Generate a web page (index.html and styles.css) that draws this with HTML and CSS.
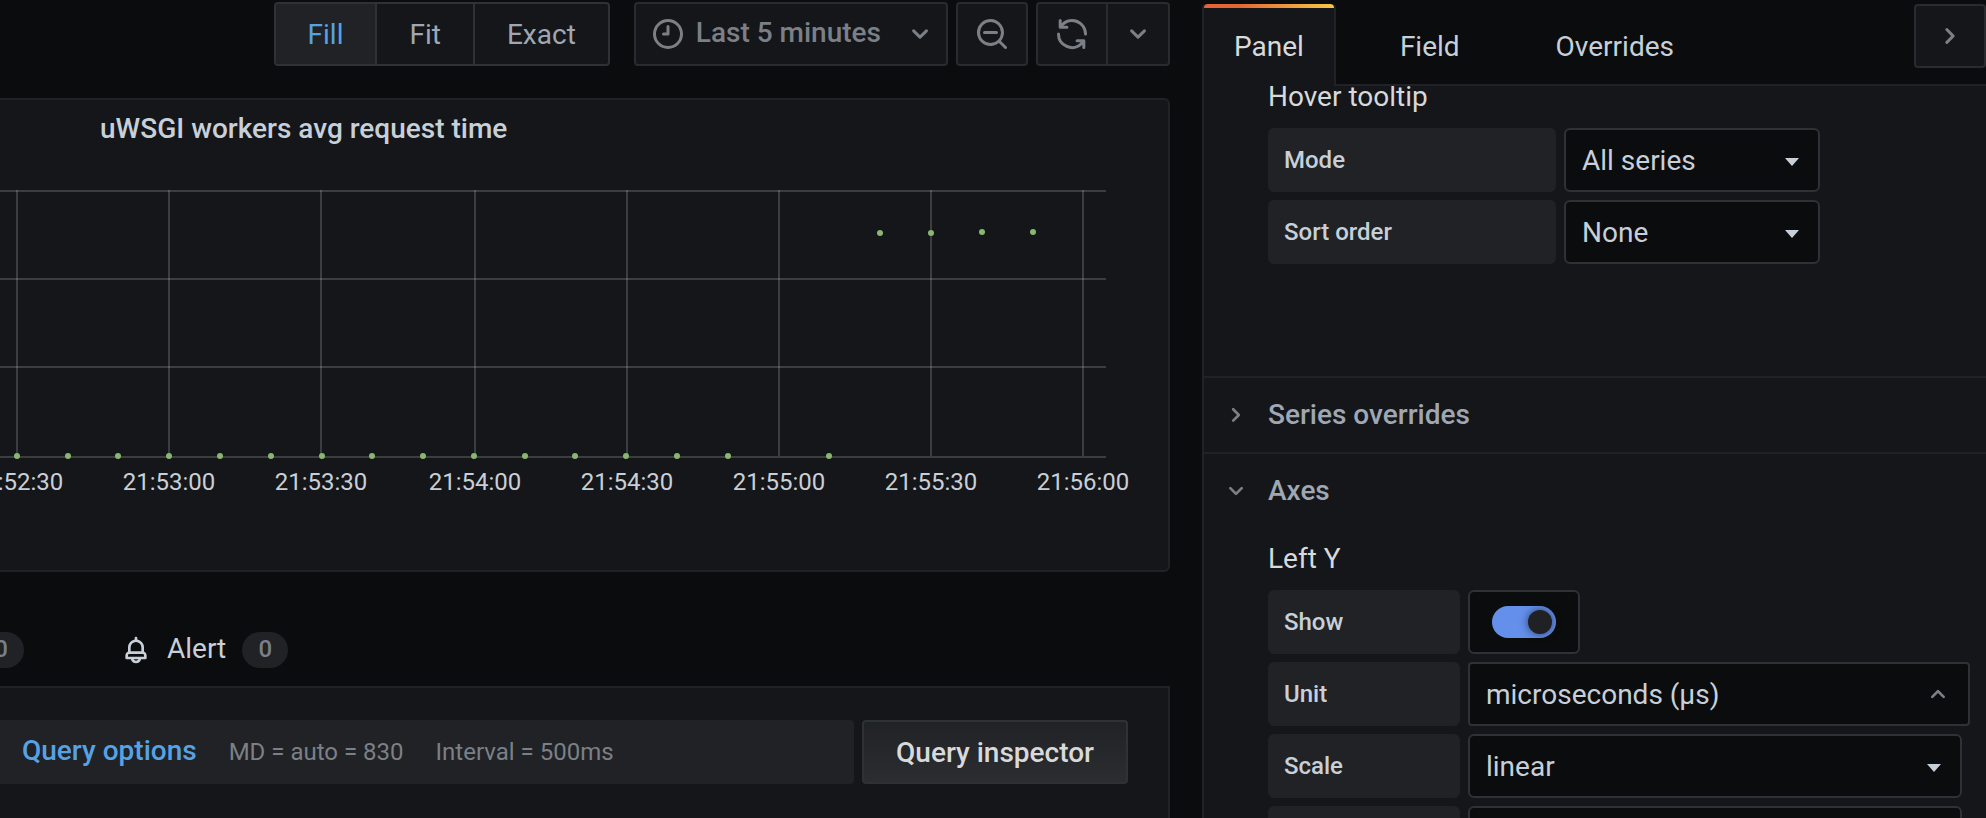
FILE: index.html
```html
<!DOCTYPE html>
<html lang="en">
<head>
<meta charset="utf-8">
<title>Edit panel</title>
<link rel="stylesheet" href="styles.css">
</head>
<body>
<svg class="sprite" aria-hidden="true">
  <symbol id="clock" viewBox="0 0 24 24"><path d="M12,2A10,10,0,1,0,22,12,10,10,0,0,0,12,2Zm0,18a8,8,0,1,1,8-8A8,8,0,0,1,12,20ZM12,6a1,1,0,0,0-1,1v4H9a1,1,0,0,0,0,2h3a1,1,0,0,0,1-1V7A1,1,0,0,0,12,6Z"/></symbol>
  <symbol id="angle" viewBox="0 0 24 24"><path d="M17,9.17a1,1,0,0,0-1.41,0L12,12.71,8.46,9.17a1,1,0,0,0-1.41,0,1,1,0,0,0,0,1.42l4.24,4.24a1,1,0,0,0,1.42,0L17,10.59A1,1,0,0,0,17,9.17Z"/></symbol>
  <symbol id="zoom-out" viewBox="0 0 24 24"><path d="M21.71,20.29,18,16.61A9,9,0,1,0,16.61,18l3.68,3.68a1,1,0,0,0,1.42,0A1,1,0,0,0,21.71,20.29ZM11,18a7,7,0,1,1,7-7A7,7,0,0,1,11,18Zm4-8H7a1,1,0,0,0,0,2h8a1,1,0,0,0,0-2Z"/></symbol>
  <symbol id="sync" viewBox="0 0 24 24"><path d="M19.91,15.51H15.38a1,1,0,0,0,0,2h2.4A8,8,0,0,1,4,12a1,1,0,0,0-2,0,10,10,0,0,0,16.88,7.23V21a1,1,0,0,0,2,0V16.5A1,1,0,0,0,19.91,15.51ZM12,2A10,10,0,0,0,5.12,4.77V3a1,1,0,0,0-2,0V7.5a1,1,0,0,0,1,1h4.5a1,1,0,0,0,0-2H6.22A8,8,0,0,1,20,12a1,1,0,0,0,2,0A10,10,0,0,0,12,2Z"/></symbol>
  <symbol id="bell" viewBox="0 0 24 24"><path d="M18,13.18V10a6,6,0,0,0-5-5.91V3a1,1,0,0,0-2,0V4.09A6,6,0,0,0,6,10v3.18A3,3,0,0,0,4,16v2a1,1,0,0,0,1,1H8.14a4,4,0,0,0,7.72,0H19a1,1,0,0,0,1-1V16A3,3,0,0,0,18,13.18ZM8,10a4,4,0,0,1,8,0v3H8Zm4,10a2,2,0,0,1-1.72-1h3.44A2,2,0,0,1,12,20Zm6-3H6V16a1,1,0,0,1,1-1H17a1,1,0,0,1,1,1Z"/></symbol>
</svg>
<div class="editor">
  <main class="main">
    <div class="toolbar">
      <div class="segmented">
        <button class="segment segment-active" type="button">Fill</button>
        <button class="segment" type="button">Fit</button>
        <button class="segment" type="button">Exact</button>
      </div>
      <button class="tool time-picker" type="button">
        <svg class="icon"><use href="#clock"/></svg>
        <span class="time-label">Last 5 minutes</span>
        <svg class="icon"><use href="#angle"/></svg>
      </button>
      <button class="tool tool-icon" type="button" aria-label="Zoom out"><svg class="icon"><use href="#zoom-out"/></svg></button>
      <div class="refresh">
        <button class="tool tool-icon refresh-run" type="button" aria-label="Refresh"><svg class="icon"><use href="#sync"/></svg></button>
        <button class="tool refresh-menu" type="button" aria-label="Refresh interval"><svg class="icon"><use href="#angle"/></svg></button>
      </div>
    </div>

    <section class="panel">
      <h2 class="panel-title">uWSGI workers avg request time</h2>
      <svg class="chart" viewBox="0 0 1168 380" preserveAspectRatio="xMaxYMin slice">
        <path class="grid" d="M0 31H1106M0 119H1106M0 207H1106M0 297H1106"/>
        <path class="grid" d="M17 30V296M169 30V296M321 30V296M475 30V296M627 30V296M779 30V296M931 30V296M1083 30V296"/>
        <g class="points">
          <circle cx="17" cy="296" r="3"/><circle cx="68" cy="296" r="3"/><circle cx="118" cy="296" r="3"/><circle cx="169" cy="296" r="3"/>
          <circle cx="220" cy="296" r="3"/><circle cx="271" cy="296" r="3"/><circle cx="322" cy="296" r="3"/><circle cx="372" cy="296" r="3"/>
          <circle cx="423" cy="296" r="3"/><circle cx="474" cy="296" r="3"/><circle cx="525" cy="296" r="3"/><circle cx="575" cy="296" r="3"/>
          <circle cx="626" cy="296" r="3"/><circle cx="677" cy="296" r="3"/><circle cx="728" cy="296" r="3"/><circle cx="829" cy="296" r="3"/>
          <circle cx="880" cy="73" r="3"/><circle cx="931" cy="73" r="3"/><circle cx="982" cy="72" r="3"/><circle cx="1033" cy="72" r="3"/>
        </g>
        <g class="ticks">
          <text x="17" y="330">21:52:30</text><text x="169" y="330">21:53:00</text><text x="321" y="330">21:53:30</text><text x="475" y="330">21:54:00</text>
          <text x="627" y="330">21:54:30</text><text x="779" y="330">21:55:00</text><text x="931" y="330">21:55:30</text><text x="1083" y="330">21:56:00</text>
        </g>
      </svg>
    </section>

    <nav class="query-tabs">
      <span class="badge badge-cut">0</span>
      <a class="query-tab" href="#alert">
        <svg class="icon icon-small"><use href="#bell"/></svg>
        <span class="query-tab-name">Alert</span>
        <span class="badge">0</span>
      </a>
    </nav>

    <section class="query">
      <div class="query-options">
        <a class="query-link" href="#options">Query options</a>
        <span>MD = auto = 830</span>
        <span>Interval = 500ms</span>
      </div>
      <button class="inspector" type="button">Query inspector</button>
    </section>
  </main>

  <aside class="side">
    <div class="side-tabs">
      <a class="side-tab side-tab-active" href="#panel">Panel</a>
      <a class="side-tab" href="#field">Field</a>
      <a class="side-tab" href="#overrides">Overrides</a>
      <button class="tool tool-icon collapse" type="button" aria-label="Close options"><svg class="icon icon-right"><use href="#angle"/></svg></button>
    </div>
    <div class="side-body">
      <section class="group group-tooltip">
        <h3 class="group-title">Hover tooltip</h3>
        <div class="field">
          <label class="label label-wide" for="mode">Mode</label>
          <div class="select select-short"><select class="control" id="mode"><option>All series</option></select></div>
        </div>
        <div class="field">
          <label class="label label-wide" for="sort">Sort order</label>
          <div class="select select-short"><select class="control" id="sort"><option>None</option></select></div>
        </div>
      </section>
      <button class="section-head" type="button"><svg class="icon icon-small icon-right"><use href="#angle"/></svg>Series overrides</button>
      <button class="section-head" type="button"><svg class="icon icon-small"><use href="#angle"/></svg>Axes</button>
      <section class="group group-axes">
        <h3 class="group-title">Left Y</h3>
        <div class="field">
          <label class="label" for="show">Show</label>
          <div class="switch-box"><input class="switch" id="show" type="checkbox" checked></div>
        </div>
        <div class="field">
          <label class="label" for="unit">Unit</label>
          <div class="unit"><input class="control" id="unit" type="text" value="microseconds (µs)"><svg class="icon icon-small unit-arrow"><use href="#angle"/></svg></div>
        </div>
        <div class="field field-inset">
          <label class="label" for="scale">Scale</label>
          <div class="select"><select class="control" id="scale"><option>linear</option></select></div>
        </div>
        <div class="field field-inset">
          <label class="label" for="minimum"></label>
          <input class="control" id="minimum" type="text">
        </div>
      </section>
    </div>
  </aside>
</div>
</body>
</html>
```
FILE: styles.css
```css
* { box-sizing: border-box; }

body {
  margin: 0;
  background: #0b0c0e;
  color: #c7d0d9;
  font-family: Roboto, "Liberation Sans", sans-serif;
  font-size: 28px;
  line-height: 32px;
}

button, input, select { font: inherit; color: inherit; margin: 0; }
button { cursor: pointer; }
a { color: inherit; text-decoration: none; }
h2, h3 { margin: 0; font-size: 28px; }

.sprite { display: none; }
.icon { width: 36px; height: 36px; fill: currentColor; flex: none; }
.icon-small { width: 32px; height: 32px; }
.icon-right { transform: rotate(-90deg); }

.editor {
  display: grid;
  grid-template-columns: 1170fr 784fr;
  gap: 32px;
  height: 100vh;
  overflow: hidden;
}
.main, .side { display: flex; flex-direction: column; min-width: 0; min-height: 0; }

/* Toolbar */
.toolbar { display: flex; justify-content: flex-end; gap: 8px; padding: 2px 0 32px; }
.segmented {
  display: flex;
  height: 64px;
  margin-right: 16px;
  border: 2px solid #2c3235;
  border-radius: 4px;
  background: #141619;
}
.segment { padding: 1px 32px 0; border: 0; background: none; color: #9fa7b3; }
.segment + .segment { border-left: 2px solid #2c3235; }
.segment-active { background: #202226; color: #57a2e5; }
.tool {
  display: flex;
  align-items: center;
  justify-content: center;
  height: 64px;
  padding: 0;
  border: 2px solid #2a2b2e;
  border-radius: 4px;
  background: #141619;
  color: #7b8087;
}
.tool-icon { width: 72px; }
.time-picker { padding: 0 8px 0 14px; font-weight: 500; }
.time-label { margin: 0 21px 0 10px; padding-bottom: 2px; }
.refresh { display: flex; }
.refresh-run { border-radius: 4px 0 0 4px; }
.refresh-menu { width: 62px; border-left: 0; border-radius: 0 4px 4px 0; }

/* Graph panel */
.panel {
  flex: none;
  padding-bottom: 30px;
  border: 2px solid #202226;
  border-left: 0;
  border-radius: 0 6px 6px 0;
  background: #141619;
}
.panel-title { padding: 13px 0 15px 100px; font-weight: 500; }
.chart { display: block; width: 100%; height: 380px; }
.grid { fill: none; stroke: #c8c8c8; stroke-opacity: .22; stroke-width: 2; }
.points { fill: #8ab573; }
.ticks { fill: #c7d0d9; font-size: 24px; text-anchor: middle; }

/* Query area */
.query-tabs { display: flex; align-items: center; gap: 96px; height: 114px; padding-top: 42px; flex: none; }
.badge {
  width: 46px;
  height: 36px;
  border-radius: 18px;
  background: #202226;
  color: #7b8087;
  font-size: 24px;
  font-weight: 500;
  line-height: 34px;
  text-align: center;
}
.badge-cut { margin-left: -22px; }
.query-tab { display: flex; align-items: center; }
.query-tab-name { margin: 0 16px 0 15px; padding-bottom: 2px; }
.query {
  flex: 1;
  display: flex;
  align-items: flex-start;
  gap: 8px;
  padding: 32px 40px 32px 0;
  border: 2px solid #202226;
  border-width: 2px 2px 0 0;
  background: #141619;
}
.query-options {
  flex: 1;
  display: flex;
  align-items: baseline;
  gap: 32px;
  height: 64px;
  padding: 15px 22px;
  border-radius: 0 4px 4px 0;
  background: #202226;
  color: #7b8087;
  font-size: 24px;
}
.query-link { color: #57a2e5; font-size: 28px; font-weight: 500; }
.inspector {
  height: 64px;
  padding: 1px 32px 0;
  border: 2px solid #2c3235;
  border-radius: 4px;
  background: linear-gradient(#202226, #2b2d31);
  color: #d8d9da;
  font-weight: 500;
}

/* Options pane */
.side-tabs {
  display: flex;
  align-items: flex-start;
  gap: 32px;
  height: 86px;
  padding-top: 4px;
  border-bottom: 2px solid #202226;
  flex: none;
}
.side-tab { position: relative; height: 82px; padding: 27px 30px 0; border: solid transparent; border-width: 0 2px; }
.side-tab-active { border-color: #202226; border-radius: 4px 4px 0 0; background: #141619; color: #d8d9da; }
.side-tab-active::before {
  content: "";
  position: absolute;
  inset: 0 0 auto;
  height: 4px;
  border-radius: 4px 4px 0 0;
  background: linear-gradient(to right, #e36434 25%, #f5c945);
}
.collapse { margin-left: auto; }
.side-body { flex: 1; min-height: 0; overflow: hidden; border-left: 2px solid #202226; background: #141619; }
.group { display: flex; flex-direction: column; gap: 8px; padding: 0 16px 0 64px; }
.group-title { margin-bottom: 7px; padding-top: 1px; color: #d8d9da; font-weight: 400; }
.group-tooltip { margin-top: -6px; padding-bottom: 112px; }
.group-axes { padding-top: 14px; }
.section-head {
  display: flex;
  align-items: center;
  gap: 16px;
  width: 100%;
  height: 76px;
  padding: 0 16px;
  border: 0;
  border-top: 2px solid #202226;
  background: none;
  color: #9fa7b3;
  font-weight: 500;
}
.section-head .icon { color: #7b8087; }

.field { display: flex; gap: 8px; height: 64px; }
.field-inset { padding-right: 8px; }
.label {
  flex: none;
  width: 192px;
  padding: 16px;
  border-radius: 6px;
  background: #202226;
  font-size: 24px;
  font-weight: 500;
}
.label-wide { width: 288px; }
.select, .unit { position: relative; flex: 1; }
.select-short { flex: 0 0 256px; }
.control {
  appearance: none;
  display: block;
  width: 100%;
  height: 64px;
  padding: 1px 16px 0;
  border: 2px solid #2c3235;
  border-radius: 6px;
  outline: 0;
  background: #0b0c0e;
}
.unit .control { border-radius: 4px; }
.select::after {
  content: "";
  position: absolute;
  right: 21px;
  top: 30px;
  border: 7px solid transparent;
  border-top: 8px solid #c7d0d9;
  border-bottom: 0;
  pointer-events: none;
}
.unit-arrow { position: absolute; right: 16px; top: 16px; color: #7b8087; transform: rotate(180deg); }
.switch-box {
  display: flex;
  align-items: center;
  justify-content: center;
  width: 112px;
  border: 2px solid #2c3235;
  border-radius: 6px;
  background: #0b0c0e;
}
.switch {
  appearance: none;
  display: flex;
  align-items: center;
  width: 64px;
  height: 32px;
  padding: 0 4px;
  border-radius: 16px;
  background: #6490eb;
}
.switch:checked { justify-content: flex-end; }
.switch::before {
  content: "";
  width: 24px;
  height: 24px;
  border-radius: 12px;
  background: #202124;
  box-shadow: 0 0 8px rgba(0, 0, 0, .6);
}
```
